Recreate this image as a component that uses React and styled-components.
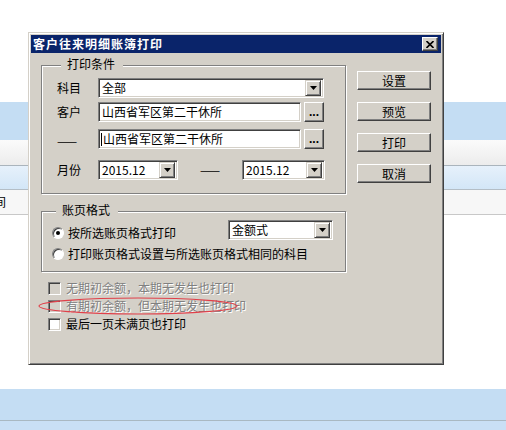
import React from 'react';
import styled, { createGlobalStyle } from 'styled-components';

const Global = createGlobalStyle`
  html, body { margin: 0; padding: 0; background: #fff; }
  body {
    font-family: "Noto Sans CJK SC", "Noto Sans", sans-serif;
    font-size: 12px;
    color: #000;
  }
  * { box-sizing: border-box; }
`;

const FACE = '#d4d0c8';

const Screen = styled.div`
  position: relative;
  width: 506px;
  height: 430px;
  overflow: hidden;
  background: #fff;
`;

/* ---------- background application ---------- */
const Page = styled.div`
  display: flex;
  flex-direction: column;
  height: 100%;
`;

const Band = styled.div`
  flex: ${p => (p.$grow ? '1 1 auto' : 'none')};
  height: ${p => (p.$h ? `${p.$h}px` : 'auto')};
  background: ${p => p.$bg || '#fff'};
  border-bottom: ${p => (p.$line ? `1px solid ${p.$line}` : 'none')};
  display: flex;
  align-items: center;
  overflow: hidden;
`;

const CellText = styled.span`
  margin-left: -18px;
  font-size: 12px;
  line-height: 14px;
  white-space: nowrap;
`;

/* ---------- dialog window ---------- */
const Dialog = styled.section`
  position: absolute;
  left: 28px;
  top: 32px;
  width: 416px;
  height: 333px;
  display: flex;
  flex-direction: column;
  background: ${FACE};
  border: 1px solid;
  border-color: ${FACE} #404040 #404040 ${FACE};
  box-shadow: inset 1px 1px 0 #fff, inset -1px -1px 0 #808080;
  padding: 2px;
`;

const TitleBar = styled.header`
  height: 18px;
  flex: none;
  display: flex;
  align-items: center;
  justify-content: space-between;
  background: #0a246a;
  padding: 0 3px 0 2px;
`;

const Title = styled.h1`
  margin: 0;
  font-size: 12px;
  font-weight: bold;
  line-height: 18px;
  letter-spacing: 1px;
  color: #fff;
`;

const CloseButton = styled.button`
  width: 16px;
  height: 14px;
  padding: 0;
  display: flex;
  align-items: center;
  justify-content: center;
  background: ${FACE};
  border: 1px solid;
  border-color: #fff #404040 #404040 #fff;
  box-shadow: inset -1px -1px 0 #808080;
`;

const Body = styled.div`
  display: flex;
  gap: 11px;
  padding: 4px 0 0 10px;
`;

const LeftColumn = styled.div`
  width: 305px;
  display: flex;
  flex-direction: column;
`;

const RightColumn = styled.div`
  width: 74px;
  display: flex;
  flex-direction: column;
  gap: 12px;
  padding-top: 14px;
`;

const PushButton = styled.button`
  width: 74px;
  height: 19px;
  padding: 0;
  font-family: inherit;
  font-size: 12px;
  line-height: 14px;
  color: #000;
  background: ${FACE};
  border: 1px solid;
  border-color: #fff #404040 #404040 #fff;
  box-shadow: inset -1px -1px 0 #808080;
`;

const Group = styled.fieldset`
  margin: ${p => p.$mt || 0}px 0 0 0;
  min-width: 0;
  width: 305px;
  border: 1px solid #808080;
  box-shadow: inset 1px 1px 0 #fff, 1px 1px 0 #fff;
  padding: ${p => p.$pad};
`;

const Legend = styled.legend`
  margin-left: 4px;
  padding: 0 8px 3px 6px;
  font-size: 12px;
  line-height: 14px;
  background: ${FACE};
`;

const FieldRow = styled.div`
  display: flex;
  align-items: ${p => p.$align || 'center'};
  height: ${p => p.$h || 20}px;
  margin-top: ${p => p.$mt || 0}px;
`;

const Label = styled.span`
  width: 41px;
  flex: none;
  font-size: 12px;
  line-height: 14px;
  white-space: nowrap;
`;

const DashLabel = styled.span`
  width: 41px;
  flex: none;
  font-size: 12px;
  line-height: 14px;
  padding-top: 4px;
  white-space: nowrap;
`;

const Sunken = styled.div`
  width: ${p => p.$w}px;
  height: ${p => p.$h || 20}px;
  flex: none;
  display: flex;
  align-items: center;
  background: #fff;
  border: 1px solid;
  border-color: #808080 #fff #fff #808080;
  box-shadow: inset 1px 1px 0 #404040, inset -1px -1px 0 ${FACE};
  padding: 0 2px 0 3px;
`;

const Value = styled.span`
  flex: 1;
  font-size: 12px;
  line-height: 16px;
  white-space: nowrap;
`;

const Caret = styled.span`
  width: 1px;
  height: 13px;
  background: #000;
  margin: 0 1px 0 -1px;
  flex: none;
`;

const ArrowButton = styled.span`
  width: 16px;
  height: 16px;
  flex: none;
  display: flex;
  align-items: center;
  justify-content: center;
  background: ${FACE};
  border: 1px solid;
  border-color: ${FACE} #404040 #404040 ${FACE};
  box-shadow: inset 1px 1px 0 #fff, inset -1px -1px 0 #808080;
`;

const DotsButton = styled.button`
  width: 20px;
  height: 20px;
  margin-left: 3px;
  padding: 0 0 2px;
  flex: none;
  font-family: "Liberation Sans", sans-serif;
  font-weight: bold;
  font-size: 12px;
  line-height: 14px;
  color: #000;
  background: ${FACE};
  border: 1px solid;
  border-color: #fff #404040 #404040 #fff;
  box-shadow: inset -1px -1px 0 #808080;
  display: flex;
  align-items: flex-end;
  justify-content: center;
`;

const RangeDash = styled.span`
  width: 64px;
  flex: none;
  text-align: center;
  font-size: 12px;
  line-height: 14px;
  white-space: nowrap;
`;

const Choice = styled.label`
  display: flex;
  align-items: center;
  gap: ${p => p.$gap || 4}px;
  height: ${p => p.$h || 14}px;
  font-size: 12px;
  line-height: 14px;
  white-space: nowrap;
  color: ${p => (p.$disabled ? '#808080' : '#000')};
  text-shadow: ${p => (p.$disabled ? '1px 1px 0 #fff' : 'none')};
`;

const RadioMark = styled.span`
  width: 12px;
  height: 12px;
  flex: none;
  border-radius: 50%;
  background: #fff;
  border: 1px solid;
  border-color: #808080 #fff #fff #808080;
  box-shadow: inset 1px 1px 0 #404040;
  display: flex;
  align-items: center;
  justify-content: center;
  &::after {
    content: '';
    width: 4px;
    height: 4px;
    border-radius: 50%;
    background: ${p => (p.$on ? '#000' : 'transparent')};
  }
`;

const CheckMark = styled.span`
  width: 13px;
  height: 13px;
  flex: none;
  background: ${p => (p.$disabled ? FACE : '#fff')};
  border: 1px solid;
  border-color: #808080 #fff #fff #808080;
  box-shadow: inset 1px 1px 0 #404040, inset -1px -1px 0 ${FACE};
`;

const CheckList = styled.div`
  display: flex;
  flex-direction: column;
  margin-top: 7px;
  padding-left: 7px;
`;

const PushRight = styled.div`
  margin-left: auto;
`;

const Annotation = styled.svg`
  position: absolute;
  left: 37px;
  top: 296px;
  overflow: visible;
  pointer-events: none;
`;

const Arrow = () => (
  <svg width="7" height="4" viewBox="0 0 7 4">
    <path d="M0 0h7L3.5 4z" fill="#000" />
  </svg>
);

const Combo = ({ w, h, children }) => (
  <Sunken $w={w} $h={h}>
    <Value>{children}</Value>
    <ArrowButton>
      <Arrow />
    </ArrowButton>
  </Sunken>
);

export default function App() {
  return (
    <>
      <Global />
      <Screen>
        <Page>
          <Band $h={102} />
          <Band $h={38} $bg="#c4ddf3" />
          <Band $h={26} $bg="linear-gradient(#fbfbfb, #ececec)" $line="#aab4bc" />
          <Band $h={24} $bg="linear-gradient(#e6f1fb, #d3e6f7)" $line="#b4bec6" />
          <Band $h={25} $bg="#f7f7f7" $line="#c8c8c8">
            <CellText>时间</CellText>
          </Band>
          <Band $grow />
          <Band $h={32} $bg="#c4ddf3" $line="#a9b8c2" />
          <Band $h={9} $bg="#c9dff5" />
        </Page>

        <Dialog>
          <TitleBar>
            <Title>客户往来明细账簿打印</Title>
            <CloseButton aria-label="关闭">
              <svg width="8" height="7" viewBox="0 0 8 7">
                <path d="M0.5 0L7.5 7M7.5 0L0.5 7" stroke="#000" strokeWidth="1.6" />
              </svg>
            </CloseButton>
          </TitleBar>

          <Body>
            <LeftColumn>
              <Group $pad="4px 19px 13px 15px">
                <Legend>打印条件</Legend>
                <FieldRow>
                  <Label>科目</Label>
                  <Combo w={226}>全部</Combo>
                </FieldRow>
                <FieldRow $mt={4}>
                  <Label>客户</Label>
                  <Sunken $w={203}>
                    <Value>山西省军区第二干休所</Value>
                  </Sunken>
                  <DotsButton>...</DotsButton>
                </FieldRow>
                <FieldRow $mt={7}>
                  <DashLabel>——</DashLabel>
                  <Sunken $w={203}>
                    <Caret />
                    <Value>山西省军区第二干休所</Value>
                  </Sunken>
                  <DotsButton>...</DotsButton>
                </FieldRow>
                <FieldRow $mt={11}>
                  <Label>月份</Label>
                  <Combo w={80}>2015.12</Combo>
                  <RangeDash>——</RangeDash>
                  <Combo w={83}>2015.12</Combo>
                </FieldRow>
              </Group>

              <Group $mt={9} $pad="0 12px 10px 10px">
                <Legend>账页格式</Legend>
                <FieldRow $align="flex-end">
                  <Choice>
                    <RadioMark $on />
                    按所选账页格式打印
                  </Choice>
                  <PushRight>
                    <Combo w={105}>金额式</Combo>
                  </PushRight>
                </FieldRow>
                <FieldRow $h={14} $mt={7}>
                  <Choice>
                    <RadioMark />
                    打印账页格式设置与所选账页格式相同的科目
                  </Choice>
                </FieldRow>
              </Group>

              <CheckList>
                <Choice $h={18} $gap={5} $disabled>
                  <CheckMark $disabled />
                  无期初余额，本期无发生也打印
                </Choice>
                <Choice $h={18} $gap={5} $disabled>
                  <CheckMark $disabled />
                  有期初余额，但本期无发生也打印
                </Choice>
                <Choice $h={18} $gap={5}>
                  <CheckMark />
                  最后一页未满页也打印
                </Choice>
              </CheckList>
            </LeftColumn>

            <RightColumn>
              <PushButton>设置</PushButton>
              <PushButton>预览</PushButton>
              <PushButton>打印</PushButton>
              <PushButton>取消</PushButton>
            </RightColumn>
          </Body>
        </Dialog>

        <Annotation width="202" height="20" viewBox="0 0 202 20">
          <ellipse cx="101" cy="10" rx="99" ry="8" fill="none" stroke="#e0404a" strokeWidth="1.1" />
        </Annotation>
      </Screen>
    </>
  );
}
